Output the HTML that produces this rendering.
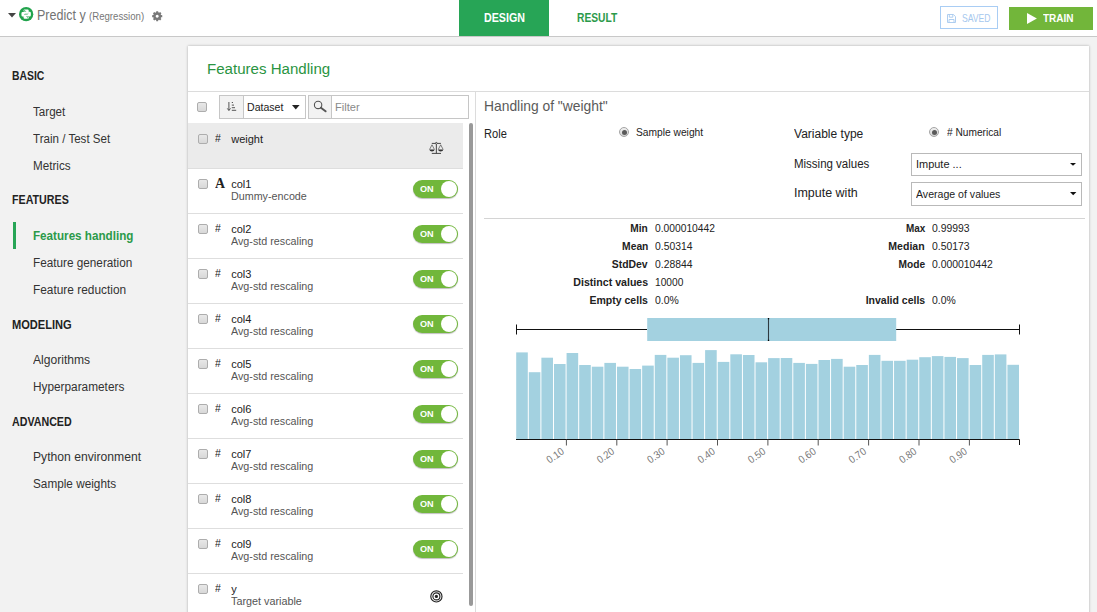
<!DOCTYPE html>
<html lang="en"><head><meta charset="utf-8"><title>Predict y (Regression) - Features Handling</title>
<style>
html,body{margin:0;padding:0}
body{width:1097px;height:612px;position:relative;overflow:hidden;background:#f2f2f2;font-family:"Liberation Sans",sans-serif}
.t{position:absolute;white-space:nowrap;display:block;line-height:1;font-family:"Liberation Sans",sans-serif}
.sf{font-family:"Liberation Serif",serif}
.b{position:absolute;box-sizing:border-box}
svg{position:absolute;overflow:visible}
.cb{width:10px;height:10px;border:1px solid #adadad;border-radius:2px;background:linear-gradient(#e8e8e8,#d8d8d8)}
.tg{width:45px;height:18px;border-radius:9px;background:#71b73b;box-shadow:0 1px 1px rgba(0,0,0,.25)}
.tg i{position:absolute;right:1px;top:1px;width:16px;height:16px;border-radius:8px;background:#fff}
.rd{width:10px;height:10px;border:1px solid #a4a4a4;border-radius:5px;background:linear-gradient(#f0f0f0,#d4d4d4)}
.rd i{position:absolute;left:1.500px;top:1.500px;width:5px;height:5px;border-radius:2.500px;background:#5a5a5a}
</style></head><body>
<div class="b" style="left:0px;top:0px;width:1097px;height:37px;background:#fff;border-bottom:1px solid #c8c8c8"></div>
<div class="b" style="left:459px;top:0px;width:90px;height:36px;background:#27a556"></div>
<span class="t" style="left:484.20px;transform-origin:0 0;top:11px;font-size:12px;line-height:14px;font-weight:bold;color:#fff;transform:scaleX(0.8890);">DESIGN</span>
<span class="t" style="left:576.80px;transform-origin:0 0;top:11px;font-size:12px;line-height:14px;font-weight:bold;color:#2b9a4a;transform:scaleX(0.8533);">RESULT</span>
<svg style="left:8px;top:13px" width="8" height="5" viewBox="0 0 8 5"><path d="M0 0H8L4 4.4Z" fill="#444"/></svg>
<svg style="left:19px;top:6.900px" width="14.3" height="14.3" viewBox="0 0 14 14"><circle cx="7" cy="7" r="7" fill="#21a34c"/><path d="M5.300 2.500H8.500Q9.500 2.500 9.500 3.500V5.600Q9.500 6.600 8.500 6.600H6.200Q4.900 6.600 4.900 7.900V9.300H3.600Q2.400 9.300 2.400 8.100V6Q2.400 4.800 3.600 4.800H7V4.300H4.500V3.300Q4.500 2.500 5.300 2.500Z" fill="#fff"/><path d="M8.700 11.500H5.500Q4.500 11.500 4.500 10.500V8.400Q4.500 7.400 5.500 7.400H7.800Q9.100 7.400 9.100 6.100V4.700H10.400Q11.600 4.700 11.600 5.900V8Q11.600 9.200 10.400 9.200H7V9.700H9.500V10.700Q9.500 11.500 8.700 11.500Z" fill="#fff"/><circle cx="5.600" cy="3.500" r=".5" fill="#21a34c"/><circle cx="8.400" cy="10.500" r=".5" fill="#21a34c"/></svg>
<svg style="left:151.950px;top:10.650px" width="10.4" height="10.4" viewBox="0 0 10.4 10.4"><path fill-rule="evenodd" d="M4.10 1.35L4.26 0.14L6.14 0.14L6.30 1.35L7.14 1.70L8.12 0.96L9.44 2.28L8.70 3.26L9.05 4.10L10.26 4.26L10.26 6.14L9.05 6.30L8.70 7.14L9.44 8.12L8.12 9.44L7.14 8.70L6.30 9.05L6.14 10.26L4.26 10.26L4.10 9.05L3.26 8.70L2.28 9.44L0.96 8.12L1.70 7.14L1.35 6.30L0.14 6.14L0.14 4.26L1.35 4.10L1.70 3.26L0.96 2.28L2.28 0.96L3.26 1.70ZM5.2 3.700a1.500 1.500 0 1 0 .001 0Z" fill="#787878"/></svg>
<span class="t" style="left:37.00px;transform-origin:0 0;top:7px;font-size:14px;line-height:16px;color:#737373;transform:scaleX(0.8942);">Predict y</span>
<span class="t" style="left:89.30px;transform-origin:0 0;top:10px;font-size:11px;line-height:12px;color:#777;transform:scaleX(0.8750);">(Regression)</span>
<div class="b" style="left:940px;top:6px;width:58px;height:23px;background:#fff;border:1px solid #a9cdf4"></div>
<span class="t" style="left:961.80px;transform-origin:0 0;top:12px;font-size:11px;line-height:12px;color:#a6c8ee;transform:scaleX(0.7813);">SAVED</span>
<svg style="left:947px;top:13.500px" width="9" height="9" viewBox="0 0 9 9"><path d="M.5.5H6.400L8.500 2.600V8.500H.5ZM2.300.5V3.200H5.800V.5M2 8.500V5.500H7V8.500" fill="none" stroke="#a6c8ee" stroke-width=".9"/></svg>
<div class="b" style="left:1009px;top:7px;width:84px;height:23px;background:#72b63a"></div>
<span class="t" style="left:1043.20px;transform-origin:0 0;top:12px;font-size:11.5px;line-height:12px;font-weight:bold;color:#fff;transform:scaleX(0.8709);">TRAIN</span>
<svg style="left:1026.700px;top:12.900px" width="10" height="11" viewBox="0 0 10 11"><path d="M0 0L9.900 5.500L0 11Z" fill="#fff"/></svg>
<span class="t" style="left:11.80px;transform-origin:0 0;top:69px;font-size:12.5px;line-height:14px;font-weight:bold;color:#222;transform:scaleX(0.8305);">BASIC</span>
<span class="t" style="left:11.80px;transform-origin:0 0;top:193px;font-size:12.5px;line-height:14px;font-weight:bold;color:#222;transform:scaleX(0.8549);">FEATURES</span>
<span class="t" style="left:11.80px;transform-origin:0 0;top:318px;font-size:12.5px;line-height:14px;font-weight:bold;color:#222;transform:scaleX(0.8863);">MODELING</span>
<span class="t" style="left:11.80px;transform-origin:0 0;top:415px;font-size:12.5px;line-height:14px;font-weight:bold;color:#222;transform:scaleX(0.8539);">ADVANCED</span>
<span class="t" style="left:33.10px;transform-origin:0 0;top:105px;font-size:12.5px;line-height:14px;color:#333;transform:scaleX(0.9297);">Target</span>
<span class="t" style="left:33.10px;transform-origin:0 0;top:132px;font-size:12.5px;line-height:14px;color:#333;transform:scaleX(0.9260);">Train / Test Set</span>
<span class="t" style="left:33.10px;transform-origin:0 0;top:159px;font-size:12.5px;line-height:14px;color:#333;transform:scaleX(0.9335);">Metrics</span>
<span class="t" style="left:33.10px;transform-origin:0 0;top:256px;font-size:12.5px;line-height:14px;color:#333;transform:scaleX(0.9401);">Feature generation</span>
<span class="t" style="left:33.10px;transform-origin:0 0;top:283px;font-size:12.5px;line-height:14px;color:#333;transform:scaleX(0.9502);">Feature reduction</span>
<span class="t" style="left:33.10px;transform-origin:0 0;top:353px;font-size:12.5px;line-height:14px;color:#333;transform:scaleX(0.9670);">Algorithms</span>
<span class="t" style="left:33.10px;transform-origin:0 0;top:380px;font-size:12.5px;line-height:14px;color:#333;transform:scaleX(0.9455);">Hyperparameters</span>
<span class="t" style="left:33.10px;transform-origin:0 0;top:450px;font-size:12.5px;line-height:14px;color:#333;transform:scaleX(0.9723);">Python environment</span>
<span class="t" style="left:33.10px;transform-origin:0 0;top:477px;font-size:12.5px;line-height:14px;color:#333;transform:scaleX(0.9417);">Sample weights</span>
<span class="t" style="left:33.30px;transform-origin:0 0;top:229px;font-size:12.5px;line-height:14px;font-weight:bold;color:#2b9a4a;transform:scaleX(0.9326);">Features handling</span>
<div class="b" style="left:13px;top:222px;width:3px;height:27px;background:#27a556"></div>
<div class="b" style="left:188px;top:46px;width:901px;height:580px;background:#fff;box-shadow:0 0 2.500px rgba(0,0,0,.30)"></div>
<span class="t" style="left:206.50px;transform-origin:0 0;top:60px;font-size:15.5px;line-height:17px;color:#2a9442;transform:scaleX(0.9727);">Features Handling</span>
<div class="b" style="left:188px;top:91px;width:901px;height:1px;background:#dcdcdc"></div>
<div class="b" style="left:475px;top:92px;width:1px;height:530px;background:#dcdcdc"></div>
<div class="b cb" style="left:197px;top:102px"></div>
<div class="b" style="left:219px;top:95px;width:25px;height:24px;background:#f2f2f2;border:1px solid #c6c6c6"></div>
<svg style="left:227px;top:102px" width="10" height="9" viewBox="0 0 10 9"><path d="M1.900 0V8.300M.300 6.400L1.900 8.500L3.500 6.400" fill="none" stroke="#555" stroke-width="1"/><path d="M4.800 .500H6M4.800 3.100H7M4.800 5.700H8M4.800 8.300H9.200" stroke="#555" stroke-width="1"/></svg>
<div class="b" style="left:243px;top:95px;width:63px;height:24px;background:#fff;border:1px solid #c6c6c6"></div>
<span class="t" style="left:246.80px;transform-origin:0 0;top:101px;font-size:11.5px;line-height:12px;color:#222;transform:scaleX(0.9184);">Dataset</span>
<svg style="left:292px;top:105px" width="8" height="5" viewBox="0 0 8 5"><path d="M0 0H7.6L3.8 4.4Z" fill="#222"/></svg>
<div class="b" style="left:308px;top:95px;width:24px;height:24px;background:#f2f2f2;border:1px solid #c6c6c6"></div>
<svg style="left:312.800px;top:99.600px" width="14" height="13" viewBox="0 0 14 13"><circle cx="5.100" cy="4.900" r="3.700" fill="none" stroke="#555" stroke-width="1.100"/><path d="M7.900 7.700L12.600 11.300" stroke="#555" stroke-width="1.900" stroke-linecap="round"/></svg>
<div class="b" style="left:331px;top:95px;width:138px;height:24px;background:#fff;border:1px solid #c6c6c6"></div>
<span class="t" style="left:334.80px;transform-origin:0 0;top:101px;font-size:11.5px;line-height:12px;color:#8a8a8a;transform:scaleX(0.9665);">Filter</span>
<div class="b" style="left:188px;top:123px;width:275px;height:45px;background:#ebebeb"></div>
<div class="b" style="left:188px;top:168px;width:275px;height:1px;background:#dedede"></div>
<div class="b cb" style="left:198px;top:134px"></div>
<span class="t" style="left:215.40px;transform-origin:0 0;top:132px;font-size:10.5px;line-height:12px;color:#222;transform:scaleX(0.9932);">#</span>
<span class="t" style="left:231.20px;transform-origin:0 0;top:133px;font-size:11px;line-height:12px;color:#222;transform:scaleX(1.0000);">weight</span>
<div class="b" style="left:188px;top:213px;width:275px;height:1px;background:#dedede"></div>
<div class="b cb" style="left:198px;top:179px"></div>
<span class="t sf" style="left:215.10px;transform-origin:0 0;top:176px;font-size:14px;line-height:15px;font-weight:bold;color:#222;transform:scaleX(0.9891);">A</span>
<span class="t" style="left:231.20px;transform-origin:0 0;top:178px;font-size:11px;line-height:12px;color:#222;transform:scaleX(1.0000);">col1</span>
<span class="t" style="left:231.20px;transform-origin:0 0;top:190px;font-size:11px;line-height:12px;color:#555;transform:scaleX(0.9763);">Dummy-encode</span>
<div class="b tg" style="left:413px;top:180px"><i></i></div>
<span class="t" style="left:420.30px;transform-origin:0 0;top:183px;font-size:9.5px;line-height:11px;font-weight:bold;color:#fff;transform:scaleX(0.9614);">ON</span>
<div class="b" style="left:188px;top:258px;width:275px;height:1px;background:#dedede"></div>
<div class="b cb" style="left:198px;top:224px"></div>
<span class="t" style="left:215.40px;transform-origin:0 0;top:222px;font-size:10.5px;line-height:12px;color:#222;transform:scaleX(0.9932);">#</span>
<span class="t" style="left:231.20px;transform-origin:0 0;top:223px;font-size:11px;line-height:12px;color:#222;transform:scaleX(1.0000);">col2</span>
<span class="t" style="left:231.20px;transform-origin:0 0;top:235px;font-size:11px;line-height:12px;color:#555;transform:scaleX(0.9777);">Avg-std rescaling</span>
<div class="b tg" style="left:413px;top:225px"><i></i></div>
<span class="t" style="left:420.30px;transform-origin:0 0;top:228px;font-size:9.5px;line-height:11px;font-weight:bold;color:#fff;transform:scaleX(0.9614);">ON</span>
<div class="b" style="left:188px;top:303px;width:275px;height:1px;background:#dedede"></div>
<div class="b cb" style="left:198px;top:269px"></div>
<span class="t" style="left:215.40px;transform-origin:0 0;top:267px;font-size:10.5px;line-height:12px;color:#222;transform:scaleX(0.9932);">#</span>
<span class="t" style="left:231.20px;transform-origin:0 0;top:268px;font-size:11px;line-height:12px;color:#222;transform:scaleX(1.0000);">col3</span>
<span class="t" style="left:231.20px;transform-origin:0 0;top:280px;font-size:11px;line-height:12px;color:#555;transform:scaleX(0.9777);">Avg-std rescaling</span>
<div class="b tg" style="left:413px;top:270px"><i></i></div>
<span class="t" style="left:420.30px;transform-origin:0 0;top:273px;font-size:9.5px;line-height:11px;font-weight:bold;color:#fff;transform:scaleX(0.9614);">ON</span>
<div class="b" style="left:188px;top:348px;width:275px;height:1px;background:#dedede"></div>
<div class="b cb" style="left:198px;top:314px"></div>
<span class="t" style="left:215.40px;transform-origin:0 0;top:312px;font-size:10.5px;line-height:12px;color:#222;transform:scaleX(0.9932);">#</span>
<span class="t" style="left:231.20px;transform-origin:0 0;top:313px;font-size:11px;line-height:12px;color:#222;transform:scaleX(1.0000);">col4</span>
<span class="t" style="left:231.20px;transform-origin:0 0;top:325px;font-size:11px;line-height:12px;color:#555;transform:scaleX(0.9777);">Avg-std rescaling</span>
<div class="b tg" style="left:413px;top:315px"><i></i></div>
<span class="t" style="left:420.30px;transform-origin:0 0;top:318px;font-size:9.5px;line-height:11px;font-weight:bold;color:#fff;transform:scaleX(0.9614);">ON</span>
<div class="b" style="left:188px;top:393px;width:275px;height:1px;background:#dedede"></div>
<div class="b cb" style="left:198px;top:359px"></div>
<span class="t" style="left:215.40px;transform-origin:0 0;top:357px;font-size:10.5px;line-height:12px;color:#222;transform:scaleX(0.9932);">#</span>
<span class="t" style="left:231.20px;transform-origin:0 0;top:358px;font-size:11px;line-height:12px;color:#222;transform:scaleX(1.0000);">col5</span>
<span class="t" style="left:231.20px;transform-origin:0 0;top:370px;font-size:11px;line-height:12px;color:#555;transform:scaleX(0.9777);">Avg-std rescaling</span>
<div class="b tg" style="left:413px;top:360px"><i></i></div>
<span class="t" style="left:420.30px;transform-origin:0 0;top:363px;font-size:9.5px;line-height:11px;font-weight:bold;color:#fff;transform:scaleX(0.9614);">ON</span>
<div class="b" style="left:188px;top:438px;width:275px;height:1px;background:#dedede"></div>
<div class="b cb" style="left:198px;top:404px"></div>
<span class="t" style="left:215.40px;transform-origin:0 0;top:402px;font-size:10.5px;line-height:12px;color:#222;transform:scaleX(0.9932);">#</span>
<span class="t" style="left:231.20px;transform-origin:0 0;top:403px;font-size:11px;line-height:12px;color:#222;transform:scaleX(1.0000);">col6</span>
<span class="t" style="left:231.20px;transform-origin:0 0;top:415px;font-size:11px;line-height:12px;color:#555;transform:scaleX(0.9777);">Avg-std rescaling</span>
<div class="b tg" style="left:413px;top:405px"><i></i></div>
<span class="t" style="left:420.30px;transform-origin:0 0;top:408px;font-size:9.5px;line-height:11px;font-weight:bold;color:#fff;transform:scaleX(0.9614);">ON</span>
<div class="b" style="left:188px;top:483px;width:275px;height:1px;background:#dedede"></div>
<div class="b cb" style="left:198px;top:449px"></div>
<span class="t" style="left:215.40px;transform-origin:0 0;top:447px;font-size:10.5px;line-height:12px;color:#222;transform:scaleX(0.9932);">#</span>
<span class="t" style="left:231.20px;transform-origin:0 0;top:448px;font-size:11px;line-height:12px;color:#222;transform:scaleX(1.0000);">col7</span>
<span class="t" style="left:231.20px;transform-origin:0 0;top:460px;font-size:11px;line-height:12px;color:#555;transform:scaleX(0.9777);">Avg-std rescaling</span>
<div class="b tg" style="left:413px;top:450px"><i></i></div>
<span class="t" style="left:420.30px;transform-origin:0 0;top:453px;font-size:9.5px;line-height:11px;font-weight:bold;color:#fff;transform:scaleX(0.9614);">ON</span>
<div class="b" style="left:188px;top:528px;width:275px;height:1px;background:#dedede"></div>
<div class="b cb" style="left:198px;top:494px"></div>
<span class="t" style="left:215.40px;transform-origin:0 0;top:492px;font-size:10.5px;line-height:12px;color:#222;transform:scaleX(0.9932);">#</span>
<span class="t" style="left:231.20px;transform-origin:0 0;top:493px;font-size:11px;line-height:12px;color:#222;transform:scaleX(1.0000);">col8</span>
<span class="t" style="left:231.20px;transform-origin:0 0;top:505px;font-size:11px;line-height:12px;color:#555;transform:scaleX(0.9777);">Avg-std rescaling</span>
<div class="b tg" style="left:413px;top:495px"><i></i></div>
<span class="t" style="left:420.30px;transform-origin:0 0;top:498px;font-size:9.5px;line-height:11px;font-weight:bold;color:#fff;transform:scaleX(0.9614);">ON</span>
<div class="b" style="left:188px;top:573px;width:275px;height:1px;background:#dedede"></div>
<div class="b cb" style="left:198px;top:539px"></div>
<span class="t" style="left:215.40px;transform-origin:0 0;top:537px;font-size:10.5px;line-height:12px;color:#222;transform:scaleX(0.9932);">#</span>
<span class="t" style="left:231.20px;transform-origin:0 0;top:538px;font-size:11px;line-height:12px;color:#222;transform:scaleX(1.0000);">col9</span>
<span class="t" style="left:231.20px;transform-origin:0 0;top:550px;font-size:11px;line-height:12px;color:#555;transform:scaleX(0.9777);">Avg-std rescaling</span>
<div class="b tg" style="left:413px;top:540px"><i></i></div>
<span class="t" style="left:420.30px;transform-origin:0 0;top:543px;font-size:9.5px;line-height:11px;font-weight:bold;color:#fff;transform:scaleX(0.9614);">ON</span>
<div class="b" style="left:188px;top:618px;width:275px;height:1px;background:#dedede"></div>
<div class="b cb" style="left:198px;top:584px"></div>
<span class="t" style="left:215.40px;transform-origin:0 0;top:582px;font-size:10.5px;line-height:12px;color:#222;transform:scaleX(0.9932);">#</span>
<span class="t" style="left:231.20px;transform-origin:0 0;top:583px;font-size:11px;line-height:12px;color:#222;transform:scaleX(1.0000);">y</span>
<span class="t" style="left:231.20px;transform-origin:0 0;top:595px;font-size:11px;line-height:12px;color:#555;transform:scaleX(0.9813);">Target variable</span>
<svg style="left:429px;top:142px" width="15" height="12" viewBox="0 0 15 12"><g fill="none" stroke="#333" stroke-width=".9"><path d="M2.800 1.400H11.900M7.350 .4V11.300M2.800 11.400H12"/><path d="M.6 7.400L3 2.800L5.400 7.400M9.300 7.400L11.700 2.800L14.100 7.400" stroke-width=".6"/></g><path d="M.3 7.400H5.700Q5.300 9.400 3 9.400Q.7 9.400 .3 7.400ZM9 7.400H14.400Q14 9.400 11.700 9.400Q9.400 9.400 9 7.400Z" fill="#333"/><circle cx="7.350" cy="1.300" r=".9" fill="#ebebeb" stroke="#333" stroke-width=".6"/></svg>
<svg style="left:430px;top:590px" width="13" height="13" viewBox="0 0 13 13"><circle cx="6.400" cy="6.400" r="5.600" fill="none" stroke="#222" stroke-width="1.150"/><circle cx="6.400" cy="6.400" r="3.500" fill="none" stroke="#222" stroke-width="1.150"/><circle cx="6.400" cy="6.400" r="1.600" fill="#222"/></svg>
<div class="b" style="left:469px;top:123px;width:4px;height:483px;background:#999;border-radius:2px"></div>
<span class="t" style="left:484.00px;transform-origin:0 0;top:97px;font-size:15px;line-height:17px;color:#5a5a5a;transform:scaleX(0.9227);">Handling of &quot;weight&quot;</span>
<span class="t" style="left:484.00px;transform-origin:0 0;top:127px;font-size:12.5px;line-height:14px;color:#222;transform:scaleX(0.8868);">Role</span>
<div class="b rd" style="left:619px;top:127px"><i></i></div>
<span class="t" style="left:636.30px;transform-origin:0 0;top:126px;font-size:10.5px;line-height:12px;color:#222;transform:scaleX(0.9743);">Sample weight</span>
<span class="t" style="left:794.40px;transform-origin:0 0;top:127px;font-size:12.5px;line-height:14px;color:#222;transform:scaleX(0.9620);">Variable type</span>
<div class="b rd" style="left:929px;top:127px"><i></i></div>
<span class="t" style="left:946.80px;transform-origin:0 0;top:127px;font-size:10px;line-height:11px;color:#222;transform:scaleX(1.0159);"># Numerical</span>
<span class="t" style="left:794.40px;transform-origin:0 0;top:157px;font-size:12.5px;line-height:14px;color:#222;transform:scaleX(0.9185);">Missing values</span>
<div class="b" style="left:911px;top:153px;width:171px;height:23px;background:#fff;border:1px solid #b9b9b9"></div>
<span class="t" style="left:915.80px;transform-origin:0 0;top:158px;font-size:11.5px;line-height:12px;color:#222;transform:scaleX(0.9533);">Impute ...</span>
<svg style="left:1069.500px;top:163px" width="7" height="4" viewBox="0 0 7 4"><path d="M0 0H6L3 2.800Z" fill="#111"/></svg>
<span class="t" style="left:794.40px;transform-origin:0 0;top:186px;font-size:12.5px;line-height:14px;color:#222;transform:scaleX(0.9982);">Impute with</span>
<div class="b" style="left:911px;top:182px;width:171px;height:24px;background:#fff;border:1px solid #b9b9b9"></div>
<span class="t" style="left:915.80px;transform-origin:0 0;top:188px;font-size:11.5px;line-height:12px;color:#222;transform:scaleX(0.9189);">Average of values</span>
<svg style="left:1069.500px;top:192px" width="7" height="4" viewBox="0 0 7 4"><path d="M0 0H6.400L3.200 3.300Z" fill="#111"/></svg>
<div class="b" style="left:484px;top:218px;width:601px;height:1px;background:#d4d4d4"></div>
<span class="t" style="left:628.30px;transform-origin:100% 0;top:222px;font-size:11.5px;line-height:12px;font-weight:bold;color:#222;transform:scaleX(0.8838);">Min</span>
<span class="t" style="left:654.60px;transform-origin:0 0;top:222px;font-size:11.5px;line-height:12px;color:#222;transform:scaleX(0.8920);">0.000010442</span>
<span class="t" style="left:618.70px;transform-origin:100% 0;top:240px;font-size:11.5px;line-height:12px;font-weight:bold;color:#222;transform:scaleX(0.8947);">Mean</span>
<span class="t" style="left:654.60px;transform-origin:0 0;top:240px;font-size:11.5px;line-height:12px;color:#222;transform:scaleX(0.8997);">0.50314</span>
<span class="t" style="left:608.48px;transform-origin:100% 0;top:258px;font-size:11.5px;line-height:12px;font-weight:bold;color:#222;transform:scaleX(0.9060);">StdDev</span>
<span class="t" style="left:654.60px;transform-origin:0 0;top:258px;font-size:11.5px;line-height:12px;color:#222;transform:scaleX(0.8997);">0.28844</span>
<span class="t" style="left:566.93px;transform-origin:100% 0;top:276px;font-size:11.5px;line-height:12px;font-weight:bold;color:#222;transform:scaleX(0.9228);">Distinct values</span>
<span class="t" style="left:654.60px;transform-origin:0 0;top:276px;font-size:11.5px;line-height:12px;color:#222;transform:scaleX(0.8849);">10000</span>
<span class="t" style="left:584.18px;transform-origin:100% 0;top:294px;font-size:11.5px;line-height:12px;font-weight:bold;color:#222;transform:scaleX(0.9152);">Empty cells</span>
<span class="t" style="left:654.60px;transform-origin:0 0;top:294px;font-size:11.5px;line-height:12px;color:#222;transform:scaleX(0.9080);">0.0%</span>
<span class="t" style="left:902.63px;transform-origin:100% 0;top:222px;font-size:11.5px;line-height:12px;font-weight:bold;color:#222;transform:scaleX(0.8627);">Max</span>
<span class="t" style="left:931.70px;transform-origin:0 0;top:222px;font-size:11.5px;line-height:12px;color:#222;transform:scaleX(0.9045);">0.99993</span>
<span class="t" style="left:885.38px;transform-origin:100% 0;top:240px;font-size:11.5px;line-height:12px;font-weight:bold;color:#222;transform:scaleX(0.9163);">Median</span>
<span class="t" style="left:931.70px;transform-origin:0 0;top:240px;font-size:11.5px;line-height:12px;color:#222;transform:scaleX(0.9045);">0.50173</span>
<span class="t" style="left:894.97px;transform-origin:100% 0;top:258px;font-size:11.5px;line-height:12px;font-weight:bold;color:#222;transform:scaleX(0.8826);">Mode</span>
<span class="t" style="left:931.70px;transform-origin:0 0;top:258px;font-size:11.5px;line-height:12px;color:#222;transform:scaleX(0.9039);">0.000010442</span>
<span class="t" style="left:859.80px;transform-origin:100% 0;top:294px;font-size:11.5px;line-height:12px;font-weight:bold;color:#222;transform:scaleX(0.9126);">Invalid cells</span>
<span class="t" style="left:931.70px;transform-origin:0 0;top:294px;font-size:11.5px;line-height:12px;color:#222;transform:scaleX(0.9042);">0.0%</span>
<svg style="left:0;top:0" width="1097" height="612" viewBox="0 0 1097 612" font-family="Liberation Sans, sans-serif"><path d="M516.5 324.5V334.5M516.5 329.5H647M896 329.5H1019.5M1019.5 324.5V334.5" stroke="#111" stroke-width="1" fill="none"/><rect x="647.2" y="318" width="249" height="23" fill="#a3d1e0"/><path d="M768.500 318V341" stroke="#2e3a40" stroke-width="1.100"/><path d="M768.500 318V319.200M768.500 339.800V341" stroke="#000" stroke-width="1.300"/><rect x="516.20" y="352.4" width="11.60" height="86.6" fill="#a3d1e0"/><rect x="528.80" y="372.2" width="11.60" height="66.8" fill="#a3d1e0"/><rect x="541.39" y="357.7" width="11.60" height="81.3" fill="#a3d1e0"/><rect x="553.99" y="364.0" width="11.60" height="75.0" fill="#a3d1e0"/><rect x="566.58" y="353.0" width="11.60" height="86.0" fill="#a3d1e0"/><rect x="579.18" y="365.0" width="11.60" height="74.0" fill="#a3d1e0"/><rect x="591.77" y="366.7" width="11.60" height="72.3" fill="#a3d1e0"/><rect x="604.37" y="362.9" width="11.60" height="76.1" fill="#a3d1e0"/><rect x="616.96" y="366.7" width="11.60" height="72.3" fill="#a3d1e0"/><rect x="629.56" y="369.0" width="11.60" height="70.0" fill="#a3d1e0"/><rect x="642.15" y="365.6" width="11.60" height="73.4" fill="#a3d1e0"/><rect x="654.75" y="354.9" width="11.60" height="84.1" fill="#a3d1e0"/><rect x="667.34" y="357.7" width="11.60" height="81.3" fill="#a3d1e0"/><rect x="679.94" y="355.2" width="11.60" height="83.8" fill="#a3d1e0"/><rect x="692.53" y="362.9" width="11.60" height="76.1" fill="#a3d1e0"/><rect x="705.12" y="350.1" width="11.60" height="88.9" fill="#a3d1e0"/><rect x="717.72" y="361.9" width="11.60" height="77.1" fill="#a3d1e0"/><rect x="730.32" y="354.3" width="11.60" height="84.7" fill="#a3d1e0"/><rect x="742.91" y="355.0" width="11.60" height="84.0" fill="#a3d1e0"/><rect x="755.51" y="362.3" width="11.60" height="76.7" fill="#a3d1e0"/><rect x="768.10" y="358.1" width="11.60" height="80.9" fill="#a3d1e0"/><rect x="780.70" y="358.0" width="11.60" height="81.0" fill="#a3d1e0"/><rect x="793.29" y="362.9" width="11.60" height="76.1" fill="#a3d1e0"/><rect x="805.88" y="363.9" width="11.60" height="75.1" fill="#a3d1e0"/><rect x="818.48" y="360.0" width="11.60" height="79.0" fill="#a3d1e0"/><rect x="831.08" y="358.9" width="11.60" height="80.1" fill="#a3d1e0"/><rect x="843.67" y="366.7" width="11.60" height="72.3" fill="#a3d1e0"/><rect x="856.27" y="365.0" width="11.60" height="74.0" fill="#a3d1e0"/><rect x="868.86" y="354.9" width="11.60" height="84.1" fill="#a3d1e0"/><rect x="881.46" y="360.8" width="11.60" height="78.2" fill="#a3d1e0"/><rect x="894.05" y="360.8" width="11.60" height="78.2" fill="#a3d1e0"/><rect x="906.64" y="359.7" width="11.60" height="79.3" fill="#a3d1e0"/><rect x="919.24" y="357.2" width="11.60" height="81.8" fill="#a3d1e0"/><rect x="931.84" y="356.1" width="11.60" height="82.9" fill="#a3d1e0"/><rect x="944.43" y="356.9" width="11.60" height="82.1" fill="#a3d1e0"/><rect x="957.03" y="358.1" width="11.60" height="80.9" fill="#a3d1e0"/><rect x="969.62" y="365.0" width="11.60" height="74.0" fill="#a3d1e0"/><rect x="982.22" y="354.9" width="11.60" height="84.1" fill="#a3d1e0"/><rect x="994.81" y="354.4" width="11.60" height="84.6" fill="#a3d1e0"/><rect x="1007.41" y="364.8" width="11.60" height="74.2" fill="#a3d1e0"/><path d="M516 439.5H1019.5V445" stroke="#111" stroke-width="1" fill="none"/><path d="M566.4 439.5V445.5" stroke="#555" stroke-width="1"/><text x="564.9" y="453" font-size="10.5" fill="#777" text-anchor="end" textLength="18.7" lengthAdjust="spacingAndGlyphs" transform="rotate(-35 564.9 453)">0.10</text><path d="M616.8 439.5V445.5" stroke="#555" stroke-width="1"/><text x="615.2" y="453" font-size="10.5" fill="#777" text-anchor="end" textLength="18.7" lengthAdjust="spacingAndGlyphs" transform="rotate(-35 615.2 453)">0.20</text><path d="M667.1 439.5V445.5" stroke="#555" stroke-width="1"/><text x="665.6" y="453" font-size="10.5" fill="#777" text-anchor="end" textLength="18.7" lengthAdjust="spacingAndGlyphs" transform="rotate(-35 665.6 453)">0.30</text><path d="M717.5 439.5V445.5" stroke="#555" stroke-width="1"/><text x="716.0" y="453" font-size="10.5" fill="#777" text-anchor="end" textLength="18.7" lengthAdjust="spacingAndGlyphs" transform="rotate(-35 716.0 453)">0.40</text><path d="M767.9 439.5V445.5" stroke="#555" stroke-width="1"/><text x="766.4" y="453" font-size="10.5" fill="#777" text-anchor="end" textLength="18.7" lengthAdjust="spacingAndGlyphs" transform="rotate(-35 766.4 453)">0.50</text><path d="M818.2 439.5V445.5" stroke="#555" stroke-width="1"/><text x="816.8" y="453" font-size="10.5" fill="#777" text-anchor="end" textLength="18.7" lengthAdjust="spacingAndGlyphs" transform="rotate(-35 816.8 453)">0.60</text><path d="M868.6 439.5V445.5" stroke="#555" stroke-width="1"/><text x="867.1" y="453" font-size="10.5" fill="#777" text-anchor="end" textLength="18.7" lengthAdjust="spacingAndGlyphs" transform="rotate(-35 867.1 453)">0.70</text><path d="M919.0 439.5V445.5" stroke="#555" stroke-width="1"/><text x="917.5" y="453" font-size="10.5" fill="#777" text-anchor="end" textLength="18.7" lengthAdjust="spacingAndGlyphs" transform="rotate(-35 917.5 453)">0.80</text><path d="M969.4 439.5V445.5" stroke="#555" stroke-width="1"/><text x="967.9" y="453" font-size="10.5" fill="#777" text-anchor="end" textLength="18.7" lengthAdjust="spacingAndGlyphs" transform="rotate(-35 967.9 453)">0.90</text></svg>
</body></html>
